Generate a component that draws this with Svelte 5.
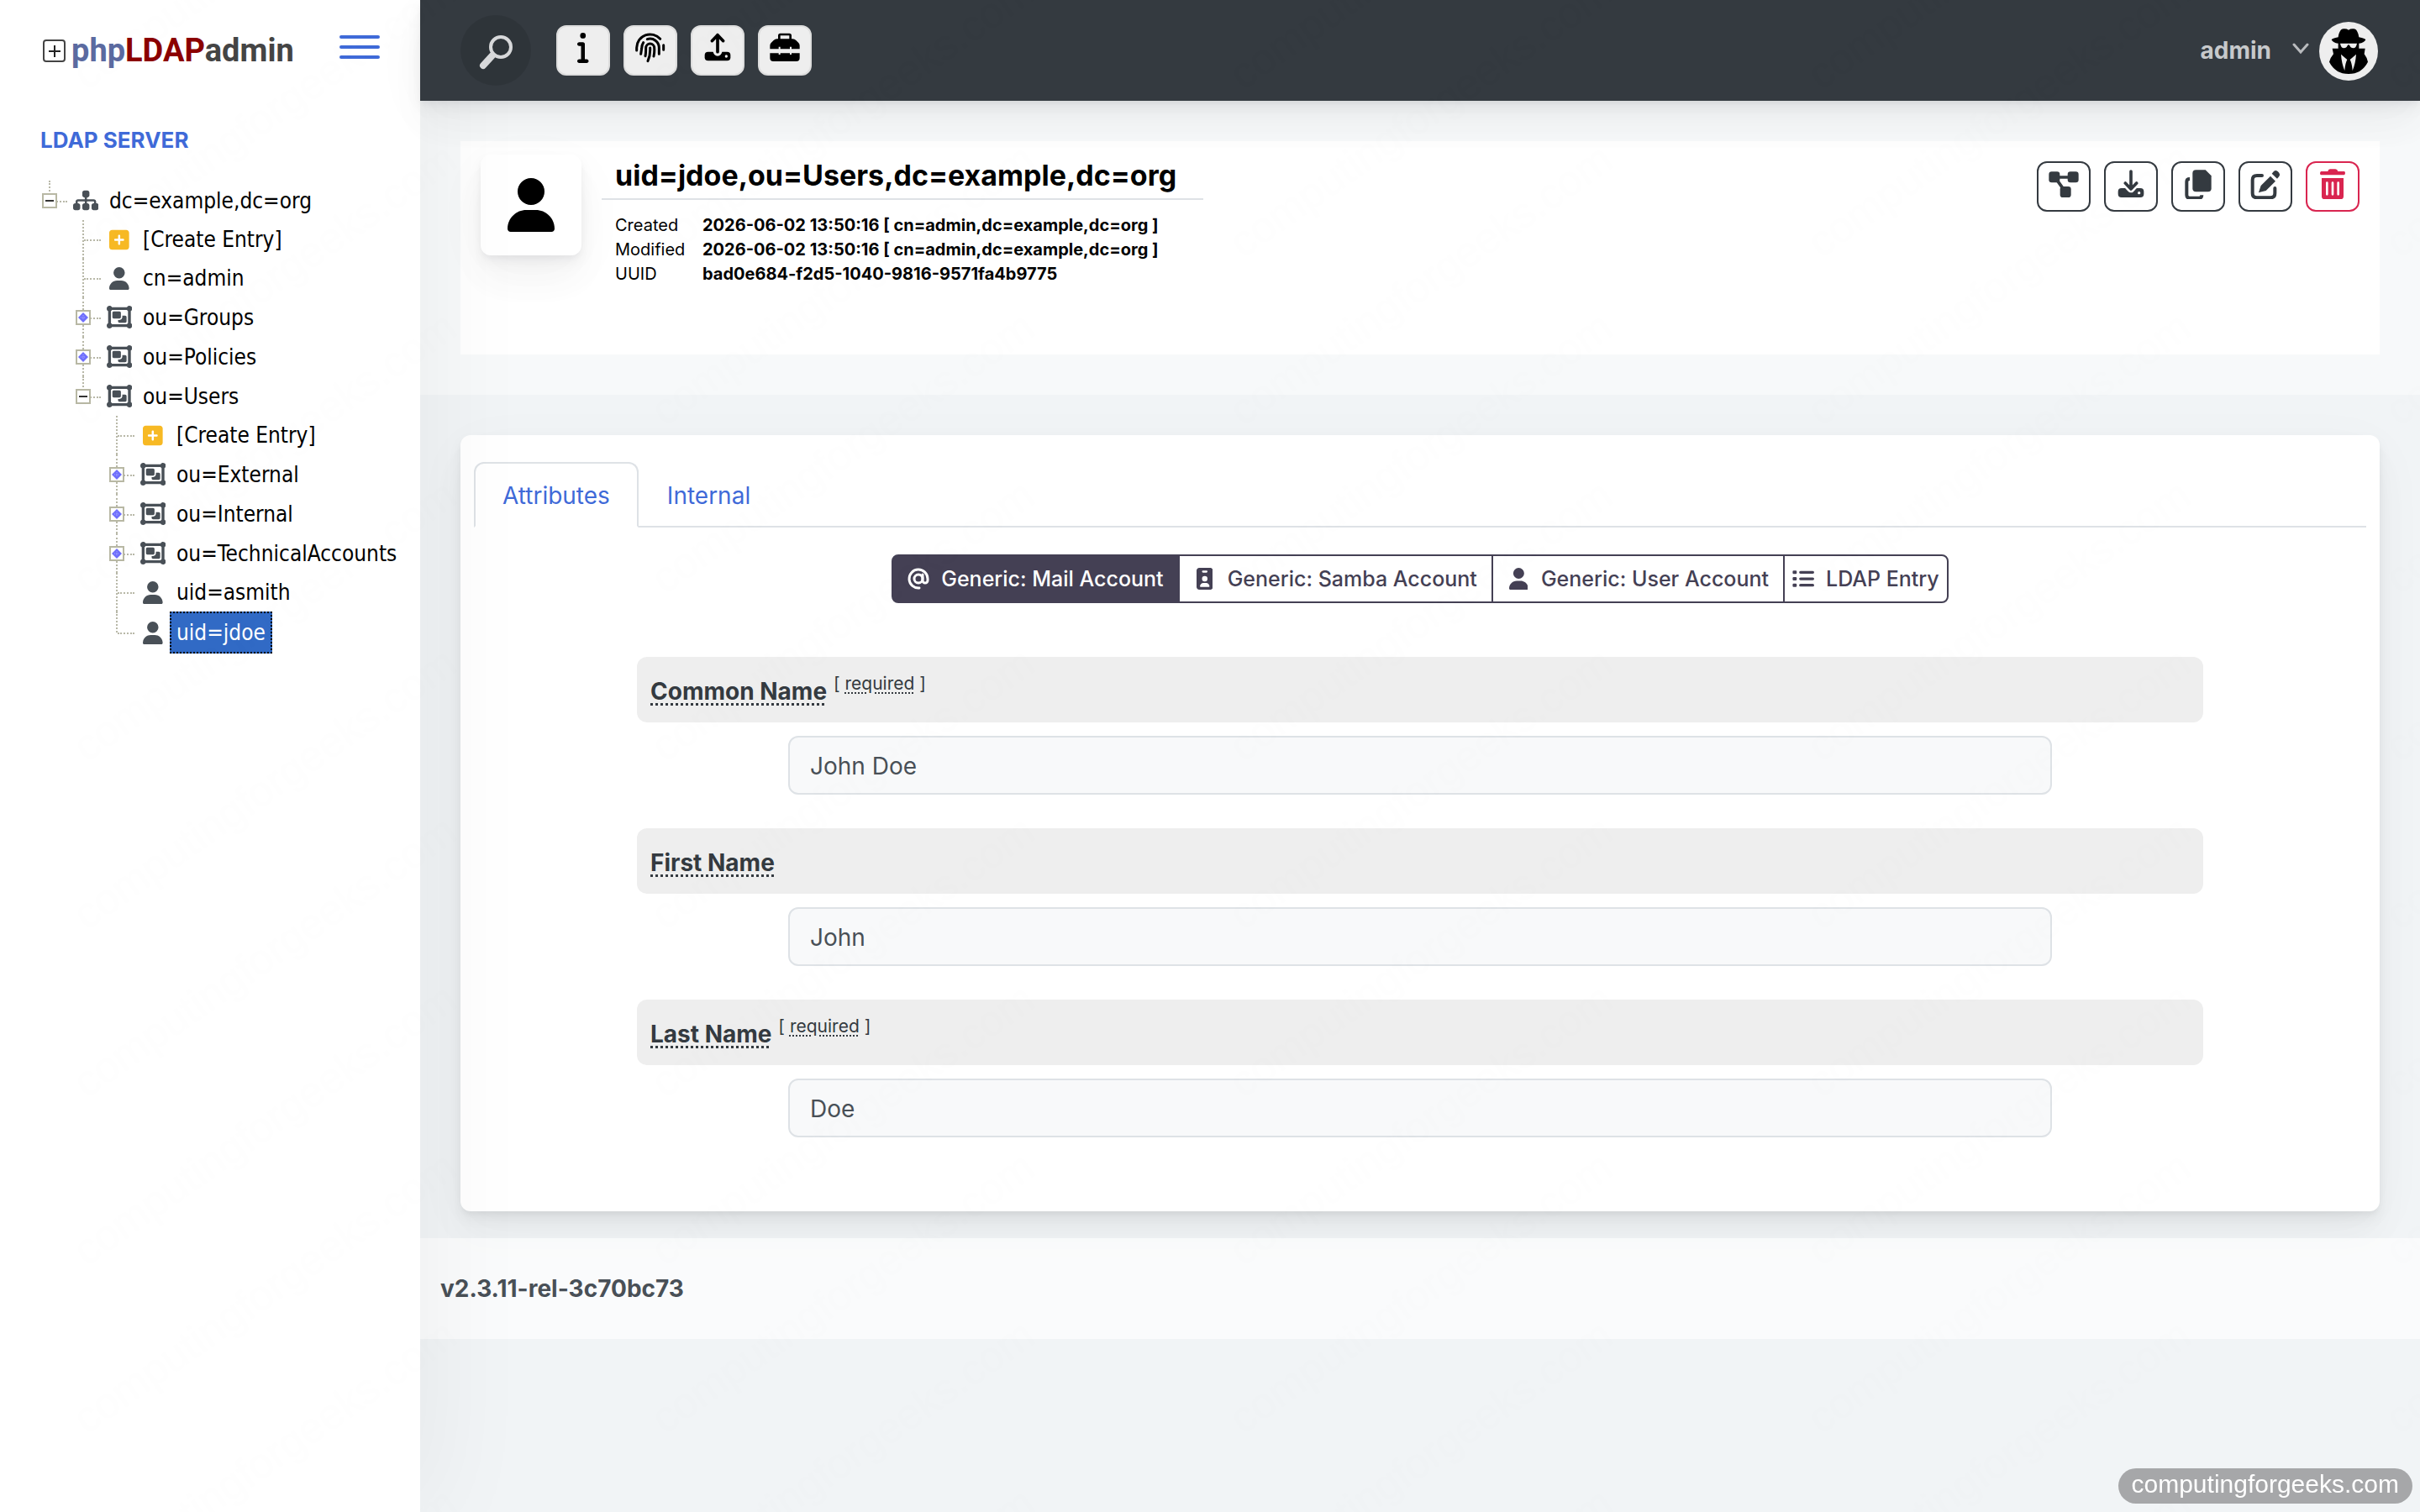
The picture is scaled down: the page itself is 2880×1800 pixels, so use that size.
<script>
    const paths = {
        user: {box: "0 0 448 512", d: "M224 256A128 128 0 1 0 224 0a128 128 0 1 0 0 256zm-45.7 48C79.8 304 0 383.8 0 482.3C0 498.7 13.3 512 29.7 512H418.3c16.4 0 29.7-13.3 29.7-29.7C448 383.8 368.2 304 269.7 304H178.3z"},
        sitemap: {box: "0 0 576 512", d: "M208 80c0-26.5 21.5-48 48-48h64c26.5 0 48 21.5 48 48v64c0 26.5-21.5 48-48 48h-8v40H464c30.9 0 56 25.1 56 56v32h8c26.5 0 48 21.5 48 48v64c0 26.5-21.5 48-48 48H464c-26.5 0-48-21.5-48-48V368c0-26.5 21.5-48 48-48h8V288c0-4.4-3.6-8-8-8H312v40h8c26.5 0 48 21.5 48 48v64c0 26.5-21.5 48-48 48H256c-26.5 0-48-21.5-48-48V368c0-26.5 21.5-48 48-48h8V280H112c-4.4 0-8 3.6-8 8v32h8c26.5 0 48 21.5 48 48v64c0 26.5-21.5 48-48 48H48c-26.5 0-48-21.5-48-48V368c0-26.5 21.5-48 48-48h8V288c0-30.9 25.1-56 56-56H264V192h-8c-26.5 0-48-21.5-48-48V80z"},
        plus: {box: "0 0 448 512", d: "M64 32C28.7 32 0 60.7 0 96V416c0 35.3 28.7 64 64 64H384c35.3 0 64-28.7 64-64V96c0-35.3-28.7-64-64-64H64zM200 344V280H136c-13.3 0-24-10.7-24-24s10.7-24 24-24h64V168c0-13.3 10.7-24 24-24s24 10.7 24 24v64h64c13.3 0 24 10.7 24 24s-10.7 24-24 24H248v64c0 13.3-10.7 24-24 24s-24-10.7-24-24z"},
        group: {box: "0 0 576 512", d: "M32 119.4C12.9 108.4 0 87.7 0 64C0 28.7 28.7 0 64 0c23.7 0 44.4 12.9 55.4 32H456.6C467.6 12.9 488.3 0 512 0c35.3 0 64 28.7 64 64c0 23.7-12.9 44.4-32 55.4V392.6c19.1 11.1 32 31.7 32 55.4c0 35.3-28.7 64-64 64c-23.7 0-44.4-12.9-55.4-32H119.4c-11.1 19.1-31.7 32-55.4 32c-35.3 0-64-28.7-64-64c0-23.7 12.9-44.4 32-55.4V119.4zM456.6 96H119.4c-5.6 9.7-13.7 17.8-23.4 23.4V392.6c9.7 5.6 17.8 13.7 23.4 23.4H456.6c5.6-9.7 13.7-17.8 23.4-23.4V119.4c-9.7-5.6-17.8-13.7-23.4-23.4zM128 160c0-17.7 14.3-32 32-32H288c17.7 0 32 14.3 32 32v96c0 17.7-14.3 32-32 32H160c-17.7 0-32-14.3-32-32V160zM256 320h32c35.3 0 64-28.7 64-64V224h64c17.7 0 32 14.3 32 32v96c0 17.7-14.3 32-32 32H288c-17.7 0-32-14.3-32-32V320z"},
        info: {box: "0 0 192 512", d: "M48 48a48 48 0 1 1 96 0A48 48 0 1 1 48 48zM0 192c0-17.7 14.3-32 32-32H96c17.7 0 32 14.3 32 32V448h32c17.7 0 32 14.3 32 32s-14.3 32-32 32H32c-17.7 0-32-14.3-32-32s14.3-32 32-32H64V224H32c-17.7 0-32-14.3-32-32z"},
        badge: {box: "0 0 384 512", d: "M64 0C28.700 0 0 28.700 0 64V448c0 35.300 28.700 64 64 64H320c35.300 0 64-28.700 64-64V64c0-35.300-28.700-64-64-64H64zM152 64h80c13 0 24 11 24 24s-11 24-24 24H152c-13 0-24-11-24-24s11-24 24-24zM192 192a64 64 0 1 1 0 128a64 64 0 1 1 0-128zM160 352h64c44 0 80 36 80 80c0 9-7 16-16 16H96c-9 0-16-7-16-16c0-44 36-80 80-80z"},
        list: {box: "0 0 512 512", d: "M32 64h48a24 24 0 0 1 24 24v32a24 24 0 0 1-24 24H32a24 24 0 0 1-24-24V88a24 24 0 0 1 24-24zM192 72H480a32 32 0 0 1 0 64H192a32 32 0 0 1 0-64zM192 224H480a32 32 0 0 1 0 64H192a32 32 0 0 1 0-64zM192 376H480a32 32 0 0 1 0 64H192a32 32 0 0 1 0-64zM32 216h48a24 24 0 0 1 24 24v32a24 24 0 0 1-24 24H32a24 24 0 0 1-24-24v-32a24 24 0 0 1 24-24zM32 368h48a24 24 0 0 1 24 24v32a24 24 0 0 1-24 24H32a24 24 0 0 1-24-24v-32a24 24 0 0 1 24-24z"}
    };

    const tree = [
        {name: "dc=example,dc=org", icon: "sitemap", state: "open", end: true, children: [
            {name: "[Create Entry]", icon: "plus"},
            {name: "cn=admin", icon: "user"},
            {name: "ou=Groups", icon: "group", state: "closed"},
            {name: "ou=Policies", icon: "group", state: "closed"},
            {name: "ou=Users", icon: "group", state: "open", end: true, children: [
                {name: "[Create Entry]", icon: "plus"},
                {name: "ou=External", icon: "group", state: "closed"},
                {name: "ou=Internal", icon: "group", state: "closed"},
                {name: "ou=TechnicalAccounts", icon: "group", state: "closed"},
                {name: "uid=asmith", icon: "user"},
                {name: "uid=jdoe", icon: "user", end: true}
            ]}
        ]}
    ];

    const details = [
        ["Created", "2026-06-02 13:50:16 [ cn=admin,dc=example,dc=org ]"],
        ["Modified", "2026-06-02 13:50:16 [ cn=admin,dc=example,dc=org ]"],
        ["UUID", "bad0e684-f2d5-1040-9816-9571fa4b9775"]
    ];

    const templates = [
        {name: "Generic: Mail Account", icon: "at"},
        {name: "Generic: Samba Account", icon: "badge"},
        {name: "Generic: User Account", icon: "user"},
        {name: "LDAP Entry", icon: "list", tight: true}
    ];

    let fields = $state([
        {id: "cn", label: "Common Name", value: "John Doe", required: true},
        {id: "givenname", label: "First Name", value: "John", required: false},
        {id: "sn", label: "Last Name", value: "Doe", required: true}
    ]);

    let selected = $state("uid=jdoe");
    let template = $state("Generic: Mail Account");
    let tab = $state("Attributes");
</script>

{#snippet glyph(name)}
    <svg class="glyph {name}" viewBox={paths[name].box} aria-hidden="true"><path d={paths[name].d} /></svg>
{/snippet}

{#snippet branch(nodes)}
    <ul>
        {#each nodes as node}
            <li>
                <div class="node" class:parent={node.state} class:current={node.name === selected}>
                    <span class="joint" class:end={node.end}>
                        {#if node.state}
                            <button class="toggle" aria-label="Toggle {node.name}">
                                <svg viewBox="0 0 18 18" aria-hidden="true">
                                    <rect x="1" y="1" width="16" height="16" fill="#fff" stroke="#b8b8a4" stroke-width="2" />
                                    {#if node.state === "open"}
                                        <path d="M4 9h10" stroke="#333" stroke-width="2" />
                                    {:else}
                                        <path d="M9 3l6 6l-6 6l-6-6z" fill="#6f6ffc" />
                                        <path d="M9 6v6M6 9h6" stroke="#a9a9ff" stroke-width="1" stroke-dasharray="1 1" />
                                    {/if}
                                </svg>
                            </button>
                        {/if}
                    </span>
                    <span class="nodeIcon">{@render glyph(node.icon)}</span>
                    <a href="#{node.name}" onclick={()=>{selected = node.name}}>{node.name}</a>
                </div>
                {#if node.children}
                    {@render branch(node.children)}
                {/if}
            </li>
        {/each}
    </ul>
{/snippet}

<div class="App">
    <aside>
        <div class="brand">
            <a class="logo" href="#home">
                <svg viewBox="0 0 28 28" aria-hidden="true">
                    <rect x="1" y="1" width="25" height="25" rx="3" fill="#fff" stroke="#444" stroke-width="2" />
                    <path d="M7 14h14M14 7v14" stroke="#222" stroke-width="2" />
                </svg>
                <span><span class="php">php</span><span class="ldap">LDAP</span>admin</span>
            </a>
            <button class="menu" aria-label="Menu"><span></span><span></span><span></span></button>
        </div>
        <h2>LDAP Server</h2>
        <nav class="tree">
            {@render branch(tree)}
        </nav>
    </aside>

    <div class="page">
        <header>
            <button class="search" aria-label="Search">
                <svg viewBox="0 0 84 84" fill="none" stroke="#d7d8da" aria-hidden="true">
                    <circle cx="48" cy="38" r="12" stroke-width="4" />
                    <path d="M38 48L27 60" stroke-width="8" stroke-linecap="round" />
                </svg>
            </button>
            <div class="tools">
                <button aria-label="Server info">{@render glyph("info")}</button>
                <button aria-label="Schema">
                    <svg viewBox="0 0 108 108" fill="none" stroke="#000" stroke-width="9" stroke-linecap="round" aria-hidden="true">
                        <path d="M5 63V53A48 48 0 0 1 89 22M101 44V61M20 76L23 56C23 47 25 41 29 35M43 23A32 32 0 0 1 85 54V76M36 83C38 74 38 66 38 54A15 15 0 0 1 68 54C69 65 68 75 66 84M53 54C54 72 51 88 45 101" />
                    </svg>
                </button>
                <button aria-label="Import">
                    <svg viewBox="0 0 108 108" aria-hidden="true">
                        <rect x="8" y="68" width="92" height="32" rx="12" />
                        <circle cx="54" cy="67" r="16" fill="#eee" />
                        <circle cx="85" cy="84" r="5" fill="#eee" />
                        <path d="M54 8V68M34 29L54 8L74 29" fill="none" stroke="#000" stroke-width="11" stroke-linecap="round" stroke-linejoin="round" />
                    </svg>
                </button>
                <button aria-label="Tools">
                    <svg viewBox="0 0 108 108" aria-hidden="true">
                        <path d="M34 24V10q0-4 4-4h32q4 0 4 4v14" fill="none" stroke="#000" stroke-width="8" />
                        <path d="M1 58V46q0-6 4-10l9-9q5-5 12-5h56q7 0 12 5l9 9q4 4 4 10v12H78v-8h-6v8H38v-8h-6v8zM1 73H32v5h6v-5H72v5h6v-5h29v17q0 12-12 12H13Q1 102 1 90z" />
                    </svg>
                </button>
            </div>
            <button class="account">
                <span>admin</span>
                <svg class="chevron" viewBox="0 0 20 14" fill="none" stroke="#b9bbbe" stroke-width="3" stroke-linecap="round" aria-hidden="true"><path d="M2 2l8 9l8-9" /></svg>
                <svg class="avatar" viewBox="0 0 210 210" aria-hidden="true">
                    <circle cx="105" cy="105" r="105" fill="#eee" />
                    <path d="M68 55C70 40 76 25 87 25Q98 24 105 29Q112 24 123 25C134 25 140 40 142 55Q164 59 166 64Q160 76 142 77V95H164L161 115Q171 128 174 143Q152 186 105 186Q58 186 36 143Q40 128 51 115L47 95H68V77Q50 76 44 64Q46 59 68 55Z" />
                    <path d="M75 77H135Q132 94 122 94Q112 94 109 85L105 81L101 85Q98 94 88 94Q78 94 75 77ZM78 116L100 135Q93 147 91 174Q80 148 78 116ZM132 116L110 135Q117 147 119 174Q130 148 132 116Z" fill="#eee" />
                </svg>
            </button>
        </header>

        <main>
            <section class="title">
                <div class="titleInner">
                    <div class="titleIcon">{@render glyph("user")}</div>
                    <div class="entry">
                        <h1>uid=jdoe,ou=Users,dc=example,dc=org</h1>
                        <table>
                            <tbody>
                                {#each details as [key, value]}
                                    <tr><th scope="row">{key}</th><td>{value}</td></tr>
                                {/each}
                            </tbody>
                        </table>
                    </div>
                    <div class="actions">
                        <button aria-label="Create child">
                            <svg viewBox="0 0 108 108" aria-hidden="true">
                                <rect x="1" y="10" width="39" height="39" rx="10" />
                                <rect x="68" y="10" width="39" height="39" rx="10" />
                                <rect x="41" y="63" width="39" height="39" rx="10" />
                                <path d="M34 30H72M30 40L54 74" stroke="#343a40" stroke-width="11" />
                            </svg>
                        </button>
                        <button aria-label="Export">
                            <svg viewBox="0 0 108 108" aria-hidden="true">
                                <rect x="8" y="69" width="92" height="33" rx="12" />
                                <path d="M34 51L54 72L74 51" fill="none" stroke="#fff" stroke-width="26" stroke-linejoin="round" />
                                <circle cx="83" cy="86" r="5" fill="#fff" />
                                <path d="M54 9V69M34 51L54 72L74 51" fill="none" stroke="#343a40" stroke-width="11" stroke-linecap="round" stroke-linejoin="round" />
                            </svg>
                        </button>
                        <button aria-label="Copy">
                            <svg viewBox="0 0 108 108" aria-hidden="true">
                                <path d="M46 4H80L101 25V70Q101 82 89 82H46Q34 82 34 70V16Q34 4 46 4Z" />
                                <path d="M24 36Q13 36 13 46V94Q13 104 23 104H58Q67 104 67 94" fill="none" stroke="#343a40" stroke-width="12" />
                            </svg>
                        </button>
                        <button aria-label="Edit">
                            <svg viewBox="0 0 108 108" aria-hidden="true">
                                <path d="M42 24H24Q8 24 8 40V87Q8 103 24 103H72Q88 103 88 87V69" fill="none" stroke="#343a40" stroke-width="12" stroke-linecap="round" />
                                <path d="M30 84Q29 86 32 84L56 78L90 44L72 26L38 60Z" />
                                <path d="M77 17L84 9Q90 3 98 9L103 14Q108 21 103 27L96 35Z" />
                            </svg>
                        </button>
                        <button class="danger" aria-label="Delete">
                            <svg viewBox="0 0 108 108" aria-hidden="true">
                                <path d="M37 9Q38 1 45 1H64Q71 1 73 9H95Q99 9 99 15T95 22H13Q9 22 9 16T13 9ZM15 33H93V98Q93 108 83 108H25Q15 108 15 98Z" />
                                <path d="M34 50V91M54 50V91M74 50V91" stroke="#fff" stroke-width="8" stroke-linecap="round" />
                            </svg>
                        </button>
                    </div>
                </div>
            </section>

            <section class="card">
                <div class="tabs" role="tablist">
                    {#each ["Attributes", "Internal"] as name}
                        <button role="tab" aria-selected={tab === name} class:active={tab === name} onclick={()=>{tab = name}}>{name}</button>
                    {/each}
                </div>

                <div class="templates">
                    {#each templates as item}
                        <button class:active={template === item.name} class:tight={item.tight} onclick={()=>{template = item.name}}>
                            <span class="templateIcon">
                                {#if item.icon === "at"}
                                    <svg viewBox="0 0 26 26" fill="none" stroke="currentColor" stroke-width="3" stroke-linecap="round" aria-hidden="true">
                                        <circle cx="13" cy="13" r="5" />
                                        <path d="M18 8v7a3 3 0 0 0 6 0v-2A11 11 0 1 0 14 24" />
                                    </svg>
                                {:else}
                                    {@render glyph(item.icon)}
                                {/if}
                            </span>
                            {item.name}
                        </button>
                    {/each}
                </div>

                <form>
                    {#each fields as field}
                        <div class="field">
                            <div class="fieldHead">
                                <label for={field.id}>{field.label}</label>
                                {#if field.required}
                                    <sup>[ <abbr title="Required">required</abbr> ]</sup>
                                {/if}
                            </div>
                            <input id={field.id} type="text" bind:value={field.value} readonly>
                        </div>
                    {/each}
                </form>
            </section>
        </main>

        <footer>v2.3.11-rel-3c70bc73</footer>
    </div>

    <svg class="watermark" aria-hidden="true">
        <defs>
            <pattern id="mark" width="688" height="200" patternUnits="userSpaceOnUse">
                {#each [108, 308, 508] as y}
                    <text transform="translate(103 {y}) rotate(-35)">computingforgeeks.com</text>
                {/each}
            </pattern>
        </defs>
        <rect width="100%" height="100%" fill="url(#mark)" />
    </svg>
    <div class="site">computingforgeeks.com</div>
</div>

<style>
    :global(body){
        margin: 0;
        background: #f1f4f6;
    }

    .App{
        display: grid;
        grid-template-columns: 500px 1fr;
        min-height: 100vh;
        color: #495057;
        font-family: Inter, "Liberation Sans", sans-serif;
        font-size: 28px;
        line-height: 42px;
    }

    .App *{
        box-sizing: border-box;
    }

    button{
        margin: 0;
        padding: 0;
        border: none;
        background: none;
        color: inherit;
        font: inherit;
        cursor: pointer;
    }

    a{
        color: inherit;
        text-decoration: none;
    }

    .glyph{
        display: block;
        height: 100%;
        fill: currentColor;
    }

    /* Sidebar */
    aside{
        position: relative;
        z-index: 1;
        background: #fff;
        box-shadow: 14px 0 120px rgba(0, 0, 0, 0.05);
    }

    .brand{
        display: flex;
        align-items: center;
        justify-content: space-between;
        height: 120px;
        padding: 0 48px 0 51px;
    }

    .logo{
        display: flex;
        align-items: center;
        gap: 6px;
        color: #444;
        font-family: Roboto, "Liberation Sans", sans-serif;
        font-size: 38px;
        font-weight: bold;
    }

    .logo svg{
        width: 28px;
        height: 28px;
        margin-top: 2px;
    }

    .php{
        color: #5b6aa0;
    }

    .ldap{
        color: #8b0000;
    }

    .menu{
        display: flex;
        flex-direction: column;
        gap: 8px;
        width: 48px;
        margin-bottom: 8px;
    }

    .menu span{
        height: 4px;
        border-radius: 2px;
        background: #3f6ad8;
    }

    h2{
        margin: 26px 0 27px 48px;
        color: #3f6ad8;
        font-size: 26px;
        font-weight: bold;
        text-transform: uppercase;
    }

    .tree{
        padding-left: 40px;
        color: #000;
        font-family: "DejaVu Sans Condensed", "DejaVu Sans", sans-serif;
        font-size: 26px;
    }

    .tree > ul{
        padding: 0;
    }

    ul{
        margin: 0;
        padding: 0 0 0 40px;
        list-style: none;
    }

    .node{
        display: flex;
        align-items: center;
        height: 46px;
    }

    .node.parent{
        height: 47px;
    }

    .node.current{
        height: 50px;
    }

    .joint{
        display: flex;
        position: relative;
        align-items: center;
        width: 40px;
        height: 100%;
        padding-left: 10px;
    }

    .joint::before{
        content: "";
        position: absolute;
        left: 18px;
        top: 0;
        bottom: 0;
        border-left: 2px dotted #b8b8a8;
    }

    .joint.end::before{
        bottom: 50%;
    }

    .joint::after{
        content: "";
        position: absolute;
        left: 20px;
        right: 0;
        top: 50%;
        border-top: 2px dotted #b8b8a8;
    }

    .toggle{
        position: relative;
        z-index: 1;
        width: 18px;
        height: 18px;
    }

    .toggle svg{
        display: block;
    }

    .nodeIcon{
        display: flex;
        justify-content: center;
        width: 44px;
        height: 27px;
        margin-right: 2px;
        color: #495057;
    }

    .nodeIcon .plus{
        color: #f7b924;
    }

    .node a{
        padding: 0 2px;
        border: 2px solid transparent;
        line-height: 42px;
        white-space: nowrap;
    }

    .current a{
        padding: 2px 6px;
        margin-left: -4px;
        border: 2px dotted #000;
        background: #316ac5;
        color: #fff;
    }

    /* Header */
    .page{
        display: flex;
        flex-direction: column;
        min-width: 0;
    }

    header{
        display: flex;
        position: relative;
        z-index: 2;
        align-items: center;
        height: 120px;
        padding: 0 50px 0 48px;
        background: #343a40;
        box-shadow: 0 15px 70px rgba(8, 10, 37, 0.03), 0 30px 45px rgba(8, 10, 37, 0.03), 0 8px 17px rgba(8, 10, 37, 0.05), 0 4px 6px rgba(8, 10, 37, 0.03);
    }

    .search{
        width: 84px;
        height: 84px;
        border-radius: 50%;
        background: rgba(0, 0, 0, 0.1);
    }

    .search svg{
        display: block;
    }

    .tools,
    .actions{
        display: flex;
        gap: 16px;
    }

    .tools{
        margin-left: 30px;
    }

    .tools button,
    .actions button{
        display: flex;
        justify-content: center;
        width: 64px;
        height: 60px;
        padding-top: 7px;
        border: 2px solid #ddd;
        border-radius: 12px;
        background: #eee;
        color: #000;
    }

    .tools svg,
    .actions svg{
        height: 36px;
    }

    .account{
        display: flex;
        align-items: center;
        margin-left: auto;
        color: #c7c9cb;
        font-weight: bold;
    }

    .chevron{
        width: 20px;
        margin: 0 12px 4px 25px;
    }

    .avatar{
        width: 70px;
        margin-top: 2px;
    }

    /* Entry title */
    .title{
        padding: 48px;
        background: rgba(255, 255, 255, 0.45);
    }

    .titleInner{
        display: flex;
        align-items: flex-start;
        min-height: 254px;
        padding: 16px 24px;
        background: #fff;
        color: #000;
    }

    .titleIcon{
        width: 120px;
        height: 120px;
        padding: 28px 0 28px 32px;
        border-radius: 12px;
        background: #fff;
        box-shadow: 0 15px 70px rgba(8, 10, 37, 0.03), 0 30px 45px rgba(8, 10, 37, 0.03), 0 8px 17px rgba(8, 10, 37, 0.05), 0 4px 6px rgba(8, 10, 37, 0.03);
    }

    .entry{
        margin-left: 24px;
    }

    h1{
        margin: 0;
        padding: 4px 32px 6px 16px;
        border-bottom: 2px solid #dee2e6;
        font-size: 34px;
        font-weight: bold;
        line-height: 42px;
    }

    table{
        margin: 16px 0 0 16px;
        border-spacing: 0;
        font-size: 20px;
        line-height: 29px;
        text-align: left;
    }

    th,
    td{
        padding: 0;
    }

    th{
        width: 104px;
        font-weight: normal;
    }

    td{
        font-weight: bold;
    }

    .actions{
        margin: 8px 0 0 auto;
    }

    .actions button{
        border-color: #343a40;
        background: #fff;
        color: #343a40;
    }

    .actions svg{
        fill: currentColor;
    }

    .actions .danger{
        border-color: #d92550;
        color: #d92550;
    }

    /* Attributes card */
    .card{
        margin: 48px 48px 32px;
        padding: 32px 16px 88px;
        border-radius: 12px;
        background: #fff;
        box-shadow: 0 15px 70px rgba(4, 9, 20, 0.03), 0 30px 45px rgba(4, 9, 20, 0.03), 0 8px 17px rgba(4, 9, 20, 0.05), 0 4px 6px rgba(4, 9, 20, 0.03);
    }

    .tabs{
        display: flex;
        border-bottom: 2px solid #dee2e6;
    }

    .tabs button{
        height: 78px;
        margin-bottom: -2px;
        padding: 2px 32px 0;
        border: 2px solid transparent;
        border-radius: 12px 12px 0 0;
        color: #3f6ad8;
    }

    .tabs .active{
        border-color: #dee2e6 #dee2e6 #fff;
        background: #fff;
    }

    .templates{
        display: flex;
        justify-content: center;
        margin: 32px 0 64px;
        color: #444054;
        font-size: 25px;
        font-weight: 500;
    }

    .templates button{
        display: flex;
        align-items: center;
        gap: 14px;
        height: 58px;
        padding: 0 17px;
        border: 2px solid #444054;
    }

    .templates button + button{
        margin-left: -2px;
    }

    .templates button:first-child{
        border-radius: 8px 0 0 8px;
    }

    .templates button:last-child{
        border-radius: 0 8px 8px 0;
    }

    .templates .tight{
        padding: 0 9px;
    }

    .templates .active{
        background: #444054;
        color: #fff;
    }

    .templateIcon{
        display: flex;
        justify-content: center;
        width: 26px;
        height: 26px;
    }

    form{
        display: flex;
        flex-direction: column;
        gap: 40px;
        padding: 0 194px;
    }

    .fieldHead{
        height: 78px;
        padding: 20px 16px 16px;
        border-radius: 12px;
        background: #eee;
        color: #343a40;
    }

    label{
        font-weight: bold;
        text-decoration: underline dotted 3px;
        text-underline-offset: 4px;
    }

    sup{
        font-size: 21px;
        line-height: 0;
        vertical-align: 12px;
    }

    abbr{
        text-decoration: underline dotted 2px;
        text-underline-offset: 3px;
    }

    input{
        display: block;
        width: calc(100% - 360px);
        height: 70px;
        margin: 16px auto 0;
        padding: 2px 24px 0;
        border: 2px solid #dee2e6;
        border-radius: 12px;
        background: #f8f9fa;
        color: #495057;
        font: inherit;
    }

    footer{
        display: flex;
        align-items: center;
        height: 120px;
        padding: 0 24px;
        background: rgba(255, 255, 255, 0.65);
        font-weight: bold;
    }

    /* Site mark */
    .watermark{
        position: fixed;
        z-index: 3;
        width: 100%;
        height: 100%;
        pointer-events: none;
    }

    .watermark text{
        fill: rgba(0, 0, 0, 0.005);
        font-family: "Liberation Sans", sans-serif;
        font-size: 51px;
    }

    .site{
        position: fixed;
        z-index: 3;
        right: 9px;
        bottom: 10px;
        height: 42px;
        padding: 0 16px;
        border-radius: 21px;
        background: #a6a7a9;
        color: #fff;
        font-family: "Liberation Sans", sans-serif;
        font-size: 30px;
        line-height: 38px;
    }
</style>
